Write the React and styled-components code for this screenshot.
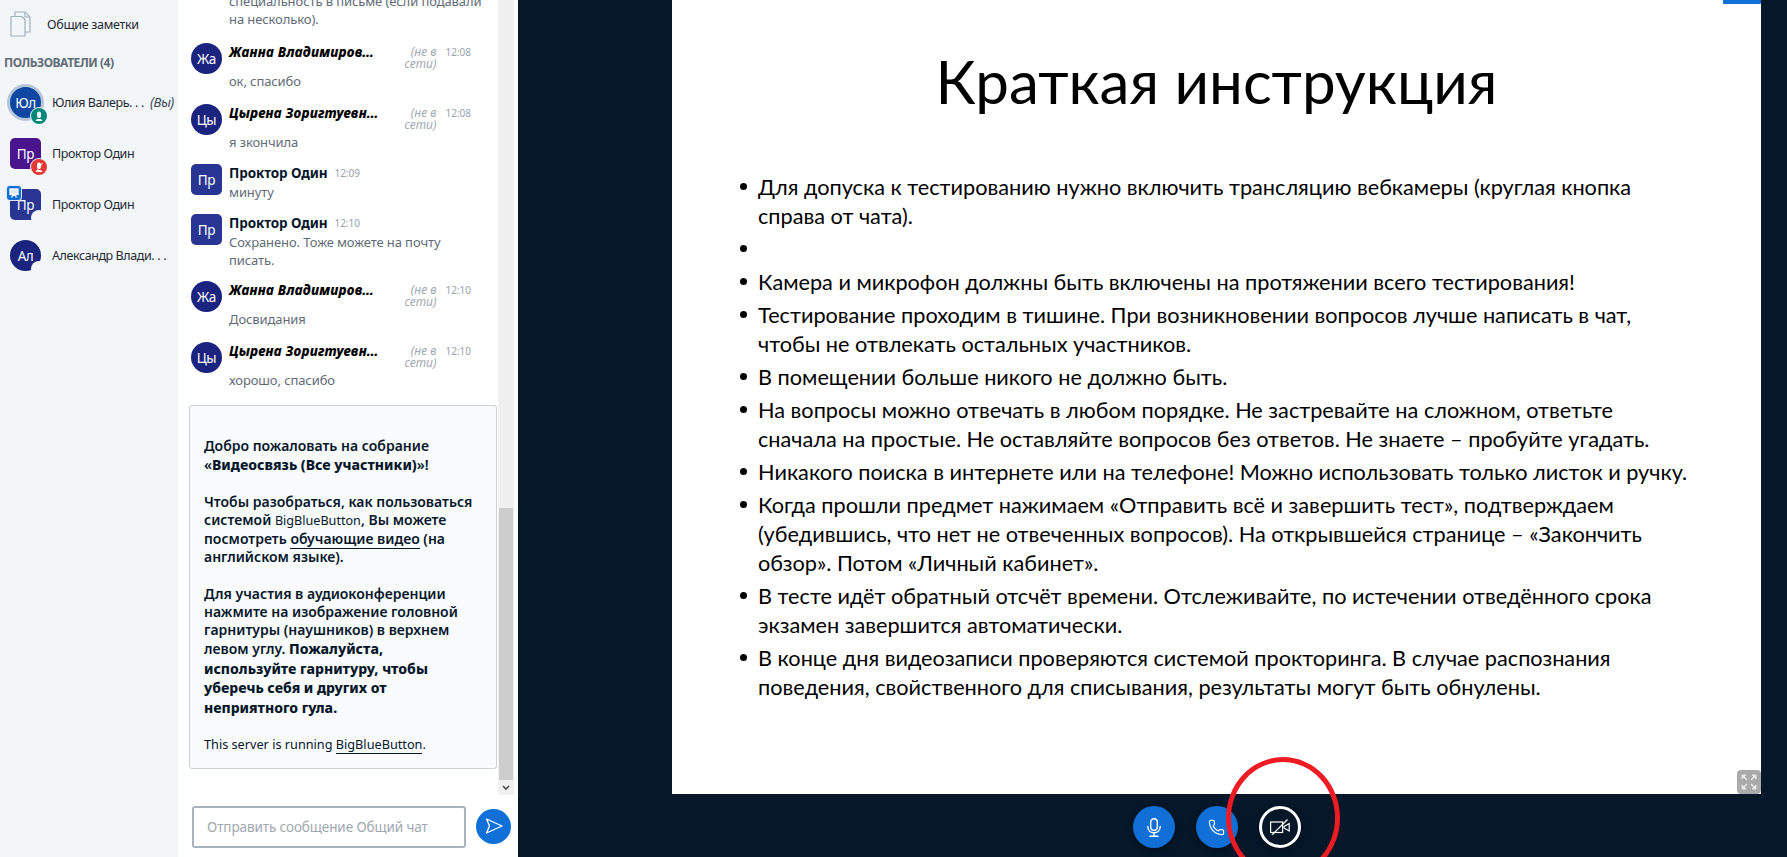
import React from 'react';
import styled, { createGlobalStyle } from 'styled-components';
import { Phone } from 'lucide-react';

const GlobalStyle = createGlobalStyle`
  html, body {
    margin: 0;
    height: 100%;
    overflow: hidden;
    background: #06172a;
  }
  * { box-sizing: border-box; }
`;

const UI_FONT = '"Noto Sans", "Open Sans", sans-serif';

const Page = styled.div`
  position: relative;
  display: flex;
  width: 1787px;
  height: 857px;
  overflow: hidden;
  font-family: ${UI_FONT};
`;

/* user list */
const UserList = styled.aside`
  flex: 0 0 178px;
  background: #f3f6f9;
  padding-top: 11px;
`;

const NotesRow = styled.div`
  display: flex;
  align-items: center;
  height: 26px;
  padding-left: 10px;
  gap: 16px;
  font-size: 12.5px;
  letter-spacing: -0.3px;
  color: #1f2933;
`;

const SectionTitle = styled.div`
  margin-top: 16px;
  padding-left: 4px;
  height: 20px;
  line-height: 20px;
  font-size: 12px;
  font-weight: 700;
  letter-spacing: -0.45px;
  color: #5f6b76;
`;

const Users = styled.div`
  display: flex;
  flex-direction: column;
  margin-top: 14px;
  gap: 20px;
`;

const UserRow = styled.div`
  display: flex;
  align-items: center;
  height: 31px;
  padding-left: 10px;
  gap: 11px;
`;

const Avatar = styled.div`
  position: relative;
  flex: 0 0 31px;
  width: 31px;
  height: 31px;
  display: flex;
  align-items: center;
  justify-content: center;
  border-radius: ${p => (p.$square ? '5px' : '50%')};
  background: ${p => p.$color};
  color: #fff;
  font-size: 13.5px;
  letter-spacing: -0.4px;
  box-shadow: ${p => (p.$ring ? '0 0 0 3px #b5c5dc' : 'none')};
`;

const Badge = styled.span`
  position: absolute;
  right: -6px;
  bottom: -6px;
  width: 16px;
  height: 16px;
  display: flex;
  align-items: center;
  justify-content: center;
  border-radius: 50%;
  background: ${p => p.$color || '#f3f6f9'};
  box-shadow: ${p => (p.$color ? '0 0 0 1px #f3f6f9' : 'none')};
`;

const PresenterMark = styled.span`
  position: absolute;
  left: -3px;
  top: -3px;
  width: 14px;
  height: 14px;
  display: flex;
  align-items: center;
  justify-content: center;
  border-radius: 3px;
  background: #1070d8;
  box-shadow: 0 0 0 1px #dfe9f5;
`;

const UserName = styled.div`
  display: flex;
  gap: 3px;
  font-size: 12.5px;
  letter-spacing: -0.42px;
  color: #1f2933;
  white-space: nowrap;

  em {
    font-size: 13.5px;
    line-height: 17px;
    color: #3c4955;
  }
`;

const Dots = styled.span`
  letter-spacing: 2.6px;
`;

/* chat */
const Chat = styled.section`
  flex: 0 0 340px;
  display: flex;
  flex-direction: column;
  background: #fff;
`;

const ChatScroll = styled.div`
  display: flex;
  height: 795px;
`;

const Messages = styled.div`
  flex: 0 0 320px;
  display: flex;
  flex-direction: column;
  justify-content: flex-end;
  overflow: hidden;
  padding: 0 1px 26px 13px;
`;

const Scrollbar = styled.div`
  flex: 0 0 16px;
  display: flex;
  flex-direction: column;
  justify-content: flex-end;
  background: #f0f0f0;
`;

const ScrollThumb = styled.div`
  height: 272px;
  margin: 0 1px;
  background: #cdcdcd;
`;

const ScrollArrow = styled.div`
  height: 15px;
  display: flex;
  align-items: center;
  justify-content: center;
`;

const Message = styled.div`
  display: flex;
  gap: 7px;
  flex-shrink: 0;
  min-height: ${p => p.$height}px;
`;

const MessageBody = styled.div`
  flex: 1;
  min-width: 0;
`;

const MessageHead = styled.div`
  display: flex;
  align-items: flex-start;
  height: ${p => (p.$offline ? '29px' : '19px')};
  padding-right: 26px;
`;

const SenderName = styled.div`
  white-space: nowrap;
  line-height: 18px;
  font-size: 13.5px;
  font-weight: ${p => (p.$offline ? 800 : 700)};
  letter-spacing: ${p => (p.$offline ? '0.2px' : '-0.1px')};
  color: ${p => (p.$offline ? '#000' : '#06172a')};
  font-style: ${p => (p.$offline ? 'italic' : 'normal')};
`;

const OfflineMark = styled.div`
  flex: 1;
  text-align: right;
  font-size: 12px;
  line-height: 12px;
  font-style: italic;
  color: #a0a8b2;
  padding: 3px 0 0 14px;
`;

const Time = styled.span`
  margin: 2px 0 0 ${p => (p.$offline ? '9px' : '7px')};
  font-size: 10px;
  line-height: 14px;
  color: #98a2ad;
`;

const MessageText = styled.div`
  font-size: 13px;
  line-height: 18px;
  letter-spacing: -0.1px;
  white-space: nowrap;
  color: #5f6b76;
`;

const Welcome = styled.div`
  flex-shrink: 0;
  margin: 12px 0 0 -2px;
  height: 364px;
  padding: 31px 14px 0;
  background: #f9fbfd;
  border: 1px solid #c8d0d8;
  border-radius: 3px;
  font-size: 14px;
  line-height: 18.2px;
  font-weight: 600;
  color: #06172a;
  white-space: nowrap;
`;

const WelcomePara = styled.p`
  margin: 0 0 18px;
`;

const ServerNote = styled.p`
  margin: 0;
  font-size: 12.7px;
  font-weight: 400;
`;

const Strong = styled.strong`
  font-weight: 800;
  line-height: 19.5px;
`;

const Plain = styled.span`
  font-size: 12.6px;
  font-weight: 400;
`;

const Underlined = styled.span`
  border-bottom: 1px solid #06172a;
`;

const Composer = styled.form`
  flex: 1;
  display: flex;
  align-items: center;
  gap: 10px;
  padding: 0 7px 0 14px;
  margin: 0;
`;

const ComposerInput = styled.div`
  flex: 0 0 274px;
  height: 42px;
  margin-top: 1px;
  padding-left: 13px;
  line-height: 38px;
  border: 2px solid #a7b3bd;
  border-radius: 3px;
  font-size: 13.5px;
  letter-spacing: -0.1px;
  color: #a0a8b0;
`;

const SendButton = styled.div`
  width: 35px;
  height: 35px;
  display: flex;
  align-items: center;
  justify-content: center;
  border-radius: 50%;
  background: #1070d8;
`;

/* presentation */
const Main = styled.main`
  flex: 1;
  min-width: 0;
  display: flex;
  flex-direction: column;
  padding: 0 26px 0 154px;
`;

const Slide = styled.div`
  position: relative;
  flex: 0 0 794px;
  padding-top: 45px;
  background: #fff;
  font-family: Lato, "Open Sans", sans-serif;
  color: #000;
`;

const SlideTitle = styled.h1`
  margin: 0;
  height: 72px;
  line-height: 72px;
  font-size: 60.1px;
  font-weight: 400;
  text-align: center;
`;

const Bullets = styled.ul`
  list-style: none;
  margin: 56px 0 0;
  padding: 0 0 0 86px;
`;

const Bullet = styled.li`
  position: relative;
  margin-bottom: 4px;
  min-height: 29px;
  font-size: 21.7px;
  line-height: 29px;
  white-space: nowrap;

  &::before {
    content: '';
    position: absolute;
    left: -18px;
    top: 10px;
    width: 7px;
    height: 7px;
    border-radius: 50%;
    background: #000;
  }
`;

const SlideTab = styled.div`
  position: absolute;
  right: 0;
  top: 0;
  width: 38px;
  height: 4px;
  background: #1070d8;
  border-radius: 0 0 1px 1px;
`;

const FullscreenButton = styled.div`
  position: absolute;
  right: 0;
  bottom: 0;
  width: 24px;
  height: 24px;
  display: flex;
  align-items: center;
  justify-content: center;
  background: #aaa;
  border-radius: 4px;
`;

const Controls = styled.div`
  flex: 1;
  display: flex;
  align-items: center;
  justify-content: center;
  gap: 21px;
  padding-top: 3px;
`;

const RoundButton = styled.div`
  width: 42px;
  height: 42px;
  display: flex;
  align-items: center;
  justify-content: center;
  border-radius: 50%;
  color: #fff;
  background: ${p => (p.$outline ? 'transparent' : '#1070d8')};
  border: ${p => (p.$outline ? '3px solid #fff' : 'none')};
  box-shadow: 0 2px 6px rgba(0, 0, 0, 0.4);
`;

/* hand drawn mark on top of the screenshot */
const RedCircle = styled.div`
  position: absolute;
  left: 1226px;
  top: 757px;
  width: 114px;
  height: 122px;
  border: 5px solid #ed1c24;
  border-radius: 50%;
  pointer-events: none;
`;

const NotesIcon = () => (
  <svg width="21" height="26" viewBox="0 0 21 26" fill="none" stroke="#9fb0c2" strokeWidth="1.2">
    <path d="M1 5.5h11l3 3V25H1z" />
    <path d="M5 5.5V1h10l5 5v15h-5" />
    <path d="M15 1v5h5" />
  </svg>
);

const BadgeUser = () => (
  <svg width="10" height="11" viewBox="0 0 10 11" fill="#fff">
    <rect x="3" y="0.5" width="4" height="6.5" rx="2" />
    <path d="M1.5 10h7L7 8H3z" />
  </svg>
);

const BadgeMuted = () => (
  <svg width="10" height="11" viewBox="0 0 10 11" fill="#fff" stroke="#fff">
    <rect x="3" y="0.5" width="4" height="6.5" rx="2" stroke="none" />
    <path d="M1.5 10h7L7 8H3z" stroke="none" />
    <path d="M8.5 1L2 10" strokeWidth="1" />
  </svg>
);

const PresenterIcon = () => (
  <svg width="10" height="10" viewBox="0 0 10 10" fill="none" stroke="#fff" strokeWidth="1.3">
    <rect x="1" y="1" width="8" height="5.5" fill="#dfe9f5" />
    <path d="M2.5 9.5L4 7h2l1.5 2.5" />
  </svg>
);

const SendIcon = () => (
  <svg width="18" height="16" viewBox="0 0 18 16" fill="none" stroke="#fff" strokeWidth="1.3" strokeLinejoin="round">
    <path d="M1.5 1L17 8 1.5 15 4.5 8z" />
  </svg>
);

const ArrowDown = () => (
  <svg width="8" height="6" viewBox="0 0 8 6" fill="none" stroke="#505050" strokeWidth="1.6">
    <path d="M1 1l3 3 3-3" />
  </svg>
);

const ExpandIcon = () => (
  <svg width="16" height="16" viewBox="0 0 16 16" fill="#e8e8e8" stroke="#e8e8e8" strokeWidth="1">
    <path d="M1 1h4L1 5zM15 1h-4l4 4zM1 15h4l-4-4zM15 15h-4l4-4z" />
    <path d="M3 3l3 3M13 3l-3 3M3 13l3-3M13 13l-3-3" fill="none" strokeWidth="1.5" />
  </svg>
);

const MicIcon = () => (
  <svg width="14" height="19" viewBox="0 0 14 19" fill="none" stroke="#fff" strokeWidth="1.4" strokeLinecap="round">
    <rect x="3.7" y="0.8" width="6.6" height="11.4" rx="3.3" />
    <path d="M0.8 8.5c0 3.8 2.6 6.2 6.2 6.2s6.2-2.4 6.2-6.2" />
    <path d="M7 14.7v3.4M3 18.2h8" />
  </svg>
);

const CameraOffIcon = () => (
  <svg width="20" height="16" viewBox="0 0 20 16" fill="none" stroke="#fff" strokeWidth="1.2">
    <rect x="0.6" y="3" width="12" height="10.5" />
    <path d="M14 7.5l5.2-3v7.4L14 9z" />
    <path d="M2 16L17.5 0.5" />
  </svg>
);

const users = [
  { id: 1, initials: 'Юл', name: 'Юлия Валерь', cut: true, you: true, color: '#0d47a1', ring: true, badge: 'talk' },
  { id: 2, initials: 'Пр', name: 'Проктор Один', color: '#4a148c', square: true, badge: 'muted' },
  { id: 3, initials: 'Пр', name: 'Проктор Один', color: '#283593', square: true, presenter: true, badge: 'none' },
  { id: 4, initials: 'Ал', name: 'Александр Влади', cut: true, color: '#1a237e', badge: 'none' },
];

const messages = [
  { id: 1, height: 51, lines: ['специальность в письме (если подавали', 'на несколько).'] },
  { id: 2, initials: 'Жа', name: 'Жанна Владимиров…', time: '12:08', offline: true, height: 61, lines: ['ок, спасибо'] },
  { id: 3, initials: 'Цы', name: 'Цырена Зоригтуевн…', time: '12:08', offline: true, height: 60, lines: ['я зкончила'] },
  { id: 4, initials: 'Пр', name: 'Проктор Один', time: '12:09', square: true, height: 50, lines: ['минуту'] },
  { id: 5, initials: 'Пр', name: 'Проктор Один', time: '12:10', square: true, height: 67, lines: ['Сохранено. Тоже можете на почту', 'писать.'] },
  { id: 6, initials: 'Жа', name: 'Жанна Владимиров…', time: '12:10', offline: true, height: 61, lines: ['Досвидания'] },
  { id: 7, initials: 'Цы', name: 'Цырена Зоригтуевн…', time: '12:10', offline: true, height: 51, lines: ['хорошо, спасибо'] },
];

const bullets = [
  ['Для допуска к тестированию нужно включить трансляцию вебкамеры (круглая кнопка', 'справа от чата).'],
  [],
  ['Камера и микрофон должны быть включены на протяжении всего тестирования!'],
  ['Тестирование проходим в тишине. При возникновении вопросов лучше написать в чат,', 'чтобы не отвлекать остальных участников.'],
  ['В помещении больше никого не должно быть.'],
  ['На вопросы можно отвечать в любом порядке. Не застревайте на сложном, ответьте', 'сначала на простые. Не оставляйте вопросов без ответов. Не знаете – пробуйте угадать.'],
  ['Никакого поиска в интернете или на телефоне! Можно использовать только листок и ручку.'],
  ['Когда прошли предмет нажимаем «Отправить всё и завершить тест», подтверждаем', '(убедившись, что нет не отвеченных вопросов). На открывшейся странице – «Закончить', 'обзор». Потом «Личный кабинет».'],
  ['В тесте идёт обратный отсчёт времени. Отслеживайте, по истечении отведённого срока', 'экзамен завершится автоматически.'],
  ['В конце дня видеозаписи проверяются системой прокторинга. В случае распознания', 'поведения, свойственного для списывания, результаты могут быть обнулены.'],
];

const withBreaks = lines =>
  lines.map((line, i) => (
    <React.Fragment key={line}>
      {i > 0 && <br />}
      {line}
    </React.Fragment>
  ));

const userBadge = kind => {
  if (kind === 'talk') return <Badge $color="#00897b"><BadgeUser /></Badge>;
  if (kind === 'muted') return <Badge $color="#e53935"><BadgeMuted /></Badge>;
  return <Badge />;
};

const App = () => (
  <Page>
    <GlobalStyle />
    <UserList>
      <NotesRow>
        <NotesIcon />
        Общие заметки
      </NotesRow>
      <SectionTitle>ПОЛЬЗОВАТЕЛИ (4)</SectionTitle>
      <Users>
        {users.map(u => (
          <UserRow key={u.id}>
            <Avatar $color={u.color} $square={u.square} $ring={u.ring}>
              {u.initials}
              {userBadge(u.badge)}
              {u.presenter && <PresenterMark><PresenterIcon /></PresenterMark>}
            </Avatar>
            <UserName>
              <span>
                {u.name}
                {u.cut && <Dots>...</Dots>}
              </span>
              {u.you && <em>(Вы)</em>}
            </UserName>
          </UserRow>
        ))}
      </Users>
    </UserList>

    <Chat>
      <ChatScroll>
        <Messages>
          {messages.map(m => (
            <Message key={m.id} $height={m.height}>
              {m.initials ? (
                <Avatar $color={m.square ? '#283593' : '#1a237e'} $square={m.square}>{m.initials}</Avatar>
              ) : (
                <Avatar $color="transparent" />
              )}
              <MessageBody>
                {m.name && (
                  <MessageHead $offline={m.offline}>
                    <SenderName $offline={m.offline}>{m.name}</SenderName>
                    {m.offline && <OfflineMark>(не в сети)</OfflineMark>}
                    <Time $offline={m.offline}>{m.time}</Time>
                  </MessageHead>
                )}
                <MessageText>{withBreaks(m.lines)}</MessageText>
              </MessageBody>
            </Message>
          ))}
          <Welcome>
            <WelcomePara>
              Добро пожаловать на собрание
              <br />
              «<Strong>Видеосвязь (Все участники)</Strong>»!
            </WelcomePara>
            <WelcomePara>
              Чтобы разобраться, как пользоваться
              <br />
              системой <Plain>BigBlueButton</Plain>, Вы можете
              <br />
              посмотреть <Underlined>обучающие видео</Underlined> (на
              <br />
              английском языке).
            </WelcomePara>
            <WelcomePara>
              Для участия в аудиоконференции
              <br />
              нажмите на изображение головной
              <br />
              гарнитуры (наушников) в верхнем
              <br />
              левом углу. <Strong>Пожалуйста,</Strong>
              <br />
              <Strong>используйте гарнитуру, чтобы</Strong>
              <br />
              <Strong>уберечь себя и других от</Strong>
              <br />
              <Strong>неприятного гула.</Strong>
            </WelcomePara>
            <ServerNote>
              This server is running <Underlined>BigBlueButton</Underlined>.
            </ServerNote>
          </Welcome>
        </Messages>
        <Scrollbar>
          <ScrollThumb />
          <ScrollArrow><ArrowDown /></ScrollArrow>
        </Scrollbar>
      </ChatScroll>
      <Composer>
        <ComposerInput>Отправить сообщение Общий чат</ComposerInput>
        <SendButton><SendIcon /></SendButton>
      </Composer>
    </Chat>

    <Main>
      <Slide>
        <SlideTab />
        <SlideTitle>Краткая инструкция</SlideTitle>
        <Bullets>
          {bullets.map((lines, i) => (
            <Bullet key={i}>{withBreaks(lines)}</Bullet>
          ))}
        </Bullets>
        <FullscreenButton><ExpandIcon /></FullscreenButton>
      </Slide>
      <Controls>
        <RoundButton><MicIcon /></RoundButton>
        <RoundButton><Phone size={17} strokeWidth={1.6} /></RoundButton>
        <RoundButton $outline><CameraOffIcon /></RoundButton>
      </Controls>
    </Main>
    <RedCircle />
  </Page>
);

export default App;
